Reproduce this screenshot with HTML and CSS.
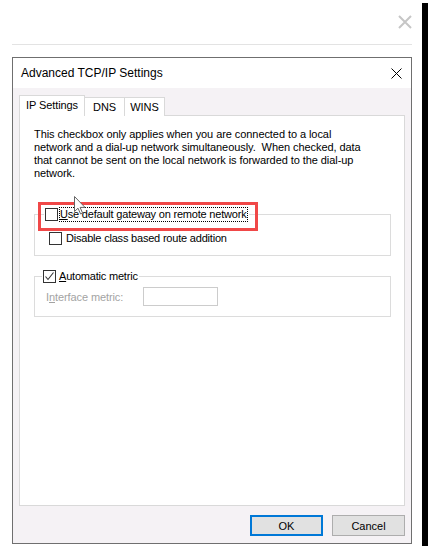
FILE: index.html
```html
<!DOCTYPE html>
<html lang="en">
<head>
    <meta charset="UTF-8">
    <meta name="viewport" content="width=device-width, initial-scale=1.0">
    <title>Advanced TCP/IP Settings</title>
    <link rel="stylesheet" href="styles.css">
</head>
<body>
    <div class="screen">
        <div class="page">
            <!-- sheet header behind the dialog -->
            <div class="sheet-head">
                <svg class="sheet-close" width="14" height="14" viewBox="0 0 14 14">
                    <path d="M1 1 L13 13 M13 1 L1 13" stroke="#c6c6c6" stroke-width="2" fill="none"/>
                </svg>
            </div>

            <div class="dialog">
                <div class="dialog-title">
                    <span>Advanced TCP/IP Settings</span>
                    <svg width="11" height="11" viewBox="0 0 11 11">
                        <path d="M0.5 0.5 L10.5 10.5 M10.5 0.5 L0.5 10.5" stroke="#000" stroke-width="1" fill="none"/>
                    </svg>
                </div>

                <div class="dialog-body">
                    <!-- tabs -->
                    <div class="tabs">
                        <div class="tab active">IP Settings</div>
                        <div class="tab">DNS</div>
                        <div class="tab">WINS</div>
                    </div>

                    <div class="panel">
                        <p class="note">
                            This checkbox only applies when you are connected to a local<br>
                            network and a dial-up network simultaneously.&nbsp; When checked, data<br>
                            that cannot be sent on the local network is forwarded to the dial-up<br>
                            network.
                        </p>

                        <!-- gateway group -->
                        <fieldset class="group group-gateway">
                            <legend class="legend">
                                <span class="box"></span>
                                <span class="caption focus"><u>U</u>se default gateway on remote network</span>
                            </legend>
                            <div class="row row-check">
                                <span class="box"></span>
                                <span class="caption">Disable class based route addition</span>
                            </div>
                        </fieldset>

                        <!-- metric group -->
                        <fieldset class="group group-metric">
                            <legend class="legend">
                                <span class="box checked">
                                    <svg width="11" height="11" viewBox="0 0 11 11">
                                        <path d="M1.5 5.5 L4 8.5 L9.5 1.5" stroke="#333" stroke-width="1.1" fill="none"/>
                                    </svg>
                                </span>
                                <span class="caption"><u>A</u>utomatic metric</span>
                            </legend>
                            <div class="row row-metric">
                                <span class="disabled">I<u>n</u>terface metric:</span>
                                <span class="field"></span>
                            </div>
                        </fieldset>
                    </div>

                    <div class="actions">
                        <button class="btn btn-default">OK</button>
                        <button class="btn">Cancel</button>
                    </div>
                </div>
            </div>
        </div>
        <div class="edge"></div>

        <!-- annotation and pointer over the dialog -->
        <div class="highlight"></div>
        <svg class="pointer" width="12" height="19" viewBox="0 0 12 19">
            <path d="M0.5 0.5 L0.5 15.5 L4 12.2 L6.6 18 L8.6 17.1 L6.1 11.4 L11 11.4 Z" fill="#fff" stroke="#666" stroke-width="1"/>
        </svg>
    </div>
</body>
</html>
```

FILE: styles.css
```css
*{
    margin: 0;
    padding: 0;
    box-sizing: border-box;
}

body{
    width: 431px;
    height: 550px;
    overflow: hidden;
    background: #fff;
    font-family: "Liberation Sans", Arial, sans-serif;
    font-size: 11px;
    color: #000;
}

.screen{
    position: relative;
    display: flex;
    height: 550px;
}

.page{
    width: 422px;
}

.edge{
    width: 6px;
    height: 543px;
    margin-top: 3px;
    background: #000;
}

.sheet-head{
    height: 45px;
    margin: 0 10px 0 12px;
    border-bottom: 1px solid #e3e3e3;
    display: flex;
    justify-content: flex-end;
    padding-top: 15px;
}

.dialog{
    margin: 12px 0 0 12px;
    width: 400px;
    height: 487px;
    border: 1px solid #6f6f6f;
    display: flex;
    flex-direction: column;
}

.dialog-title{
    height: 30px;
    background: #fff;
    display: flex;
    align-items: center;
    justify-content: space-between;
    padding: 0 9px 0 8px;
    font-size: 12px;
}

.dialog-body{
    flex: 1;
    background: #f5f2f5;
    padding: 7px 6px 0 6px;
    display: flex;
    flex-direction: column;
}

.tabs{
    display: flex;
    align-items: flex-end;
    height: 21px;
    margin-bottom: -1px;
    position: relative;
    z-index: 1;
}

.tab{
    height: 19px;
    width: 41px;
    margin-left: -1px;
    border: 1px solid #d9d9d9;
    border-bottom: none;
    background: #fff;
    display: flex;
    align-items: center;
    justify-content: center;
    letter-spacing: -0.1px;
}

.tab.active{
    height: 21px;
    width: 66px;
    margin-left: 0;
    padding-bottom: 2px;
}

.panel{
    height: 391px;
    background: #fff;
    border: 1px solid #d9d9d9;
    padding: 12px 14px 0 14px;
}

.note{
    line-height: 13px;
    letter-spacing: -0.07px;
}

.group{
    width: 357px;
    border: 1px solid #dcdcdc;
    padding: 0;
}

.group-gateway{
    margin-top: 27px;
    padding-bottom: 9px;
}

.group-metric{
    margin-top: 13px;
    padding-bottom: 10px;
}

.legend{
    display: flex;
    align-items: center;
    height: 15px;
    padding: 0 1px;
}

.group-gateway .legend{
    margin-left: 9px;
    gap: 1px;
}

.group-metric .legend{
    margin-left: 7px;
    gap: 3px;
}

.box{
    width: 13px;
    height: 13px;
    border: 1px solid #333;
    background: #fff;
    display: flex;
    align-items: center;
    justify-content: center;
    flex: none;
}

.caption{
    line-height: 13px;
    white-space: nowrap;
    letter-spacing: -0.2px;
}

.focus{
    border: 1px dotted #000;
    padding: 0 1px 0 0;
}

.row{
    display: flex;
    align-items: center;
}

.row-check{
    height: 15px;
    margin-top: 9px;
    padding-left: 14px;
    gap: 4px;
}

.row-metric{
    margin-top: 3px;
    padding-left: 11px;
}

.disabled{
    width: 97px;
    color: #a3a3a3;
    letter-spacing: -0.1px;
}

.field{
    width: 75px;
    height: 19px;
    border: 1px solid #cccccc;
    background: #fff;
}

.actions{
    display: flex;
    justify-content: flex-end;
    gap: 9px;
    margin-top: 9px;
}

.btn{
    width: 73px;
    height: 21px;
    border: 1px solid #adadad;
    background: #e1e1e1;
    font-family: "Liberation Sans", Arial, sans-serif;
    font-size: 11px;
    color: #000;
}

.btn-default{
    border: 2px solid #0078d7;
}

.highlight{
    position: absolute;
    left: 38px;
    top: 202px;
    width: 220px;
    height: 29px;
    border: 3px solid #f04848;
}

.pointer{
    position: absolute;
    left: 74px;
    top: 196px;
}
```
